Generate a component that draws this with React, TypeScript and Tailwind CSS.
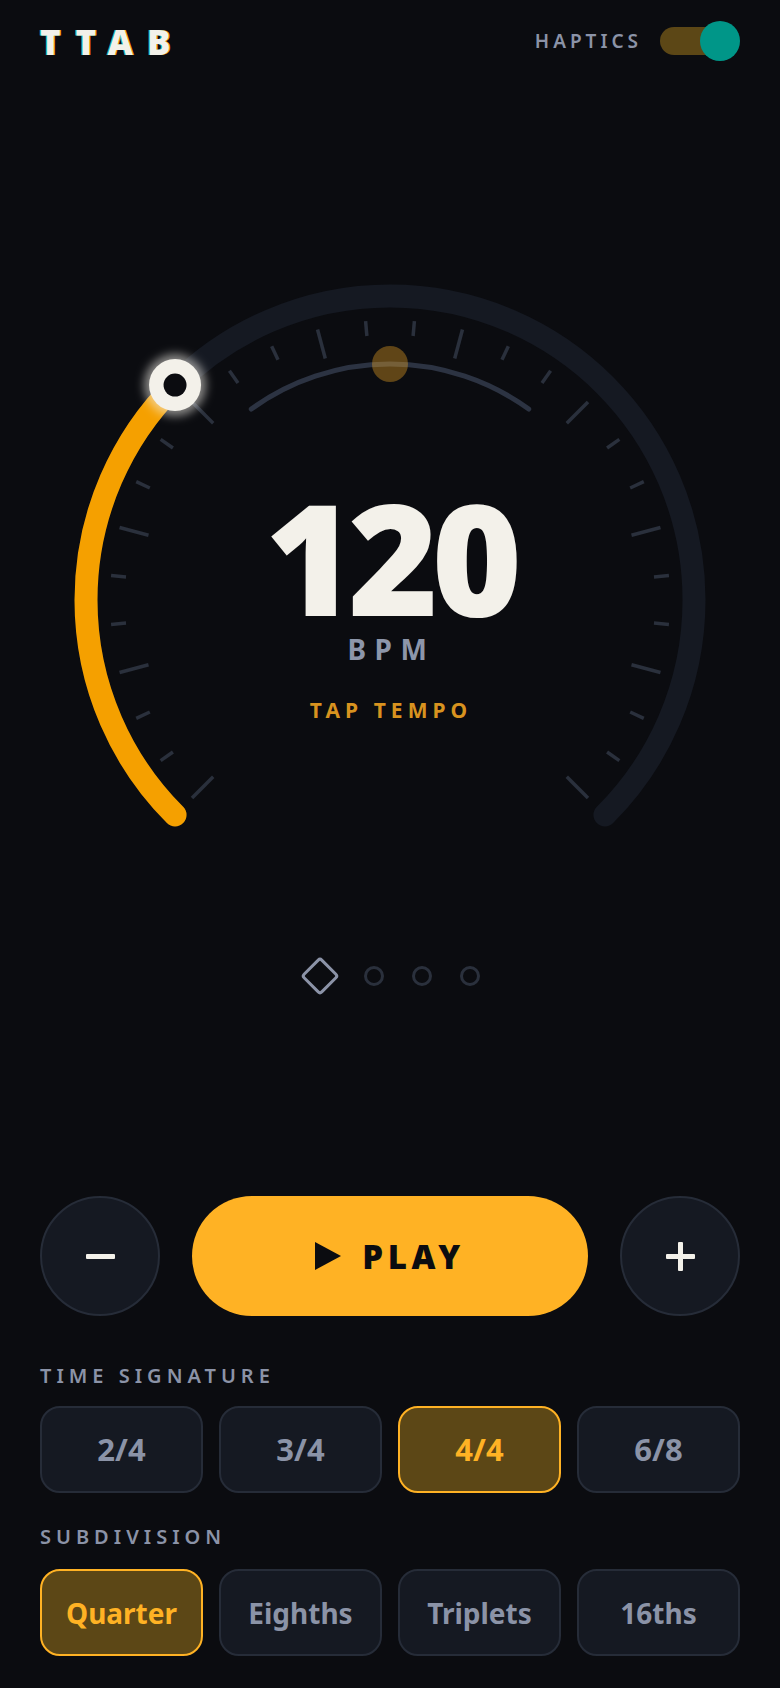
import { useState } from "react";

const CX = 390;
const CY = 340;

function polar(r: number, deg: number) {
  const a = (deg * Math.PI) / 180;
  return { x: CX + r * Math.cos(a), y: CY - r * Math.sin(a) };
}

function Gauge() {
  const ticks = Array.from({ length: 28 }, (_, k) => {
    const deg = 225 - k * 10;
    const major = k % 3 === 0;
    const a = polar(major ? 250 : 265, deg);
    const b = polar(280, deg);
    return { a, b, key: k };
  });

  const start = polar(304, 225);
  const end = polar(304, -45);
  const knob = polar(304, 135);
  const innerA = polar(236, 126);
  const innerB = polar(236, 54);

  return (
    <div className="relative mt-[178px] h-[580px]">
      <svg width="780" height="580" viewBox="0 0 780 580" className="block">
        <defs>
          <filter id="glow" x="-100%" y="-100%" width="300%" height="300%">
            <feGaussianBlur stdDeviation="5" />
          </filter>
        </defs>
        <path
          d={`M ${start.x} ${start.y} A 304 304 0 1 1 ${end.x} ${end.y}`}
          fill="none"
          stroke="#151922"
          strokeWidth="23"
          strokeLinecap="round"
        />
        {ticks.map((t) => (
          <line
            key={t.key}
            x1={t.a.x}
            y1={t.a.y}
            x2={t.b.x}
            y2={t.b.y}
            stroke="#2a303c"
            strokeWidth="3.5"
          />
        ))}
        <path
          d={`M ${innerA.x} ${innerA.y} A 236 236 0 0 1 ${innerB.x} ${innerB.y}`}
          fill="none"
          stroke="#2c3342"
          strokeWidth="5"
          strokeLinecap="round"
        />
        <circle cx={CX} cy={CY - 236} r="18" fill="#ffb224" fillOpacity="0.35" />
        <path
          d={`M ${start.x} ${start.y} A 304 304 0 0 1 ${knob.x} ${knob.y}`}
          fill="none"
          stroke="#f5a000"
          strokeWidth="23"
          strokeLinecap="round"
        />
        <circle cx={knob.x} cy={knob.y} r="31" fill="#f3f1ea" fillOpacity="0.55" filter="url(#glow)" />
        <circle cx={knob.x} cy={knob.y} r="26" fill="#f3f1ea" />
        <circle cx={knob.x} cy={knob.y} r="11.5" fill="#0b0c10" />
      </svg>

      <div className="absolute left-0 right-0 top-[236px] flex flex-col items-center">
        <div className="text-[154px] leading-[120px] font-black tracking-[-0.045em] text-[#f3f1ea]">
          120
        </div>
        <div className="mt-[19px] text-[28px] leading-none font-bold tracking-[0.3em] pl-[0.1em] text-[#8d96aa]">
          BPM
        </div>
        <div className="mt-[37px] text-[21px] leading-none font-bold tracking-[0.24em] pl-[0.1em] text-[#d8931f]">
          TAP TEMPO
        </div>
      </div>
    </div>
  );
}

function Pager() {
  return (
    <div className="mt-[116px] flex h-10 items-center justify-center">
      <div className="flex h-10 w-10 items-center justify-center">
        <div className="h-[28px] w-[28px] rotate-45 rounded-[4px] border-[3px] border-[#8b93a7]" />
      </div>
      <div className="ml-6 flex items-center gap-7">
        <div className="h-5 w-5 rounded-full border-[3px] border-[#2a303c]" />
        <div className="h-5 w-5 rounded-full border-[3px] border-[#2a303c]" />
        <div className="h-5 w-5 rounded-full border-[3px] border-[#2a303c]" />
      </div>
    </div>
  );
}

function Choice({
  label,
  active,
  size,
  onClick,
}: {
  label: string;
  active: boolean;
  size: string;
  onClick: () => void;
}) {
  return (
    <button
      onClick={onClick}
      className={
        (active
          ? "h-[87px] rounded-[20px] border-2 border-[#ffb224] bg-[#5c4716] font-bold text-[#ffb224] "
          : "h-[87px] rounded-[20px] border-2 border-[#262c38] bg-[#151922] font-bold text-[#8b93a7] ") + size
      }
    >
      {label}
    </button>
  );
}

export default function App() {
  const [haptics, setHaptics] = useState(true);
  const [sig, setSig] = useState("4/4");
  const [sub, setSub] = useState("Quarter");

  return (
    <div className="min-h-[1688px] bg-[#0b0c10] font-['Noto_Sans','Open_Sans',sans-serif]">
      <header className="flex h-[82px] items-center justify-between px-10">
        <div className="text-[35px] font-black leading-none tracking-[0.4em] text-[#f3f1ea] [text-shadow:-1px_0_#14b8a6,1px_0_#f59e0b]">
          TTAB
        </div>
        <div className="flex items-center gap-[18px]">
          <span className="text-[19px] font-semibold tracking-[0.21em] text-[#8b93a7]">HAPTICS</span>
          <button
            onClick={() => setHaptics(!haptics)}
            className="relative flex h-10 w-20 items-center"
          >
            <span className="h-[28px] w-[70px] rounded-full bg-[#5c4716]" />
            <span className="absolute right-0 top-0 h-10 w-10 rounded-full bg-[#009688]" />
          </button>
        </div>
      </header>

      <Gauge />
      <Pager />

      <div className="mt-[200px] px-10">
        <div className="flex items-center justify-between">
          <button className="flex h-[120px] w-[120px] items-center justify-center rounded-full border-2 border-[#262c38] bg-[#151922]">
            <span className="h-[5px] w-[29px] rounded-[1px] bg-[#f3f1ea]" />
          </button>
          <button className="flex h-[120px] w-[396px] items-center justify-center gap-[21px] rounded-full bg-[#ffb224]">
            <svg width="26" height="28" viewBox="0 0 26 28">
              <path d="M0 0 L26 14 L0 28 Z" fill="#0b0c10" />
            </svg>
            <span className="text-[33px] font-black leading-none tracking-[0.14em] text-[#0b0c10]">PLAY</span>
          </button>
          <button className="relative flex h-[120px] w-[120px] items-center justify-center rounded-full border-2 border-[#262c38] bg-[#151922]">
            <span className="h-[5px] w-[29px] rounded-[1px] bg-[#f3f1ea]" />
            <span className="absolute h-[29px] w-[5px] rounded-[1px] bg-[#f3f1ea]" />
          </button>
        </div>

        <div className="mt-[46px] text-[20px] font-semibold leading-[28px] tracking-[0.25em] text-[#8b93a7]">
          TIME SIGNATURE
        </div>
        <div className="mt-[16px] grid grid-cols-4 gap-4">
          {["2/4", "3/4", "4/4", "6/8"].map((s) => (
            <Choice key={s} label={s} size="text-[31px]" active={sig === s} onClick={() => setSig(s)} />
          ))}
        </div>

        <div className="mt-[30px] text-[20px] font-semibold leading-[28px] tracking-[0.25em] text-[#8b93a7]">
          SUBDIVISION
        </div>
        <div className="mt-[18px] grid grid-cols-4 gap-4">
          {["Quarter", "Eighths", "Triplets", "16ths"].map((s) => (
            <Choice key={s} label={s} size="text-[28px]" active={sub === s} onClick={() => setSub(s)} />
          ))}
        </div>
      </div>
    </div>
  );
}
